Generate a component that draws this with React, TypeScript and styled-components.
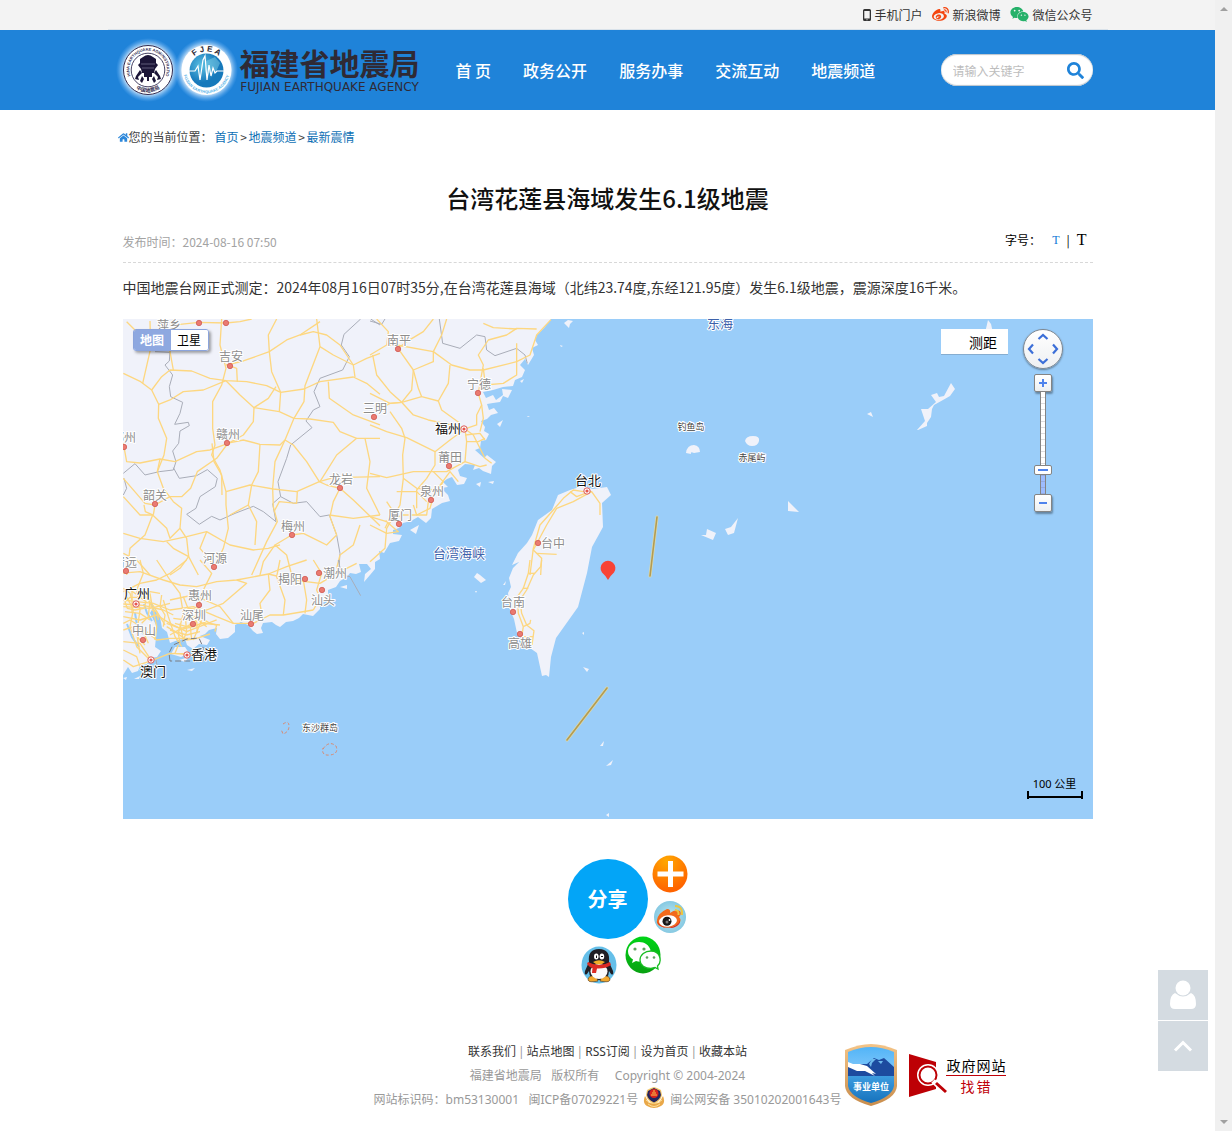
import React, { useState } from 'react';
import styled, { createGlobalStyle, css } from 'styled-components';
import { FaHome, FaSearch, FaWeibo, FaWeixin } from 'react-icons/fa';

const brand = '#1f83d9';
const cjk = '"Noto Sans CJK SC", sans-serif';
const ui = '"Noto Sans", "Noto Sans CJK SC", sans-serif';

const GlobalStyle = createGlobalStyle`
  *, *::before, *::after { box-sizing: border-box; }
  body { margin: 0; background: #fff; font-family: ${cjk}; font-size: 12px; line-height: 24px; color: #333; }
  a { color: inherit; text-decoration: none; }
  button { font: inherit; color: inherit; border: 0; padding: 0; background: none; cursor: pointer; }
  svg { display: block; }
`;

/* ---------- page frame ---------- */

const Shell = styled.div`
  display: flex;
  min-height: 100vh;
`;
const Page = styled.div`
  flex: 1;
  min-width: 0;
`;
const ScrollRail = styled.div`
  position: sticky;
  top: 0;
  width: 17px;
  height: 100vh;
  flex: none;
  display: flex;
  flex-direction: column;
  align-items: center;
  justify-content: space-between;
  padding: 7px 0;
  background: #f0f0f0;
`;
const Container = styled.div`
  width: 100%;
  max-width: 1000px;
  margin: 0 auto;
`;

/* ---------- top bar ---------- */

const TopBar = styled.div`
  background: #f3f3f3;
`;
const TopLinks = styled(Container)`
  display: flex;
  justify-content: flex-end;
  align-items: center;
  gap: 10px;
  height: 30px;
  padding-right: 15px;
  border-bottom: 1px solid #d9e2ea;
`;
const TopLink = styled.a`
  display: flex;
  align-items: center;
  gap: 3px;
`;

/* ---------- header ---------- */

const Header = styled.header`
  background: ${brand};
`;
const HeaderRow = styled(Container)`
  display: flex;
  align-items: center;
  height: 80px;
  padding: 0 15px 0 8px;
`;
const Brand = styled.a`
  display: flex;
  align-items: center;
  color: #2f2a35;
`;
const BrandText = styled.span`
  display: flex;
  flex-direction: column;
  align-items: center;
  margin-left: 2px;
`;
const BrandName = styled.span`
  font-size: 30px;
  font-weight: 700;
  line-height: 34px;
`;
const BrandLatin = styled.span`
  font-family: "DejaVu Sans", sans-serif;
  font-size: 12px;
  line-height: 16px;
  white-space: nowrap;
`;
const Nav = styled.nav`
  display: flex;
  margin-left: 20px;
`;
const NavLink = styled.a`
  padding: 0 16px;
  font-size: 16px;
  font-weight: 500;
  color: #fff;
`;
const SearchBox = styled.form`
  display: flex;
  align-items: center;
  width: 152px;
  height: 32px;
  margin-left: auto;
  padding: 0 9px 0 12px;
  border-radius: 16px;
  background: #fff;
  box-shadow: inset 0 1px 1px #b9c3cc, inset 0 -1px 1px #b9c3cc;
`;
const SearchInput = styled.input`
  flex: 1;
  min-width: 0;
  padding: 0;
  border: 0;
  outline: 0;
  background: none;
  font: 12px ${cjk};
  &::placeholder { color: #bdbdbd; opacity: 1; }
`;
const SearchButton = styled.button`
  color: ${brand};
`;

/* ---------- article ---------- */

const Breadcrumb = styled.nav`
  display: flex;
  align-items: center;
  padding: 15px 10px 0;
  color: #444;
`;
const HomeMark = styled.span`
  color: #2c87da;
`;
const Trail = styled.span`
  display: flex;
  padding-left: 2px;
`;
const Crumb = styled.a`
  color: #0d6fb5;
`;
const CrumbSep = styled.span`
  width: 10px;
  text-align: center;
`;
const Article = styled.article`
  padding: 0 15px;
`;
const Title = styled.h1`
  margin: 31px 0 14px;
  font-size: 24px;
  font-weight: 500;
  line-height: 36px;
  text-align: center;
  color: #111;
`;
const Meta = styled.div`
  display: flex;
  justify-content: space-between;
  padding-bottom: 8px;
  border-bottom: 1px dashed #d8d8d8;
  color: #a3a3a3;
`;
const FontSizes = styled.div`
  display: flex;
  align-items: center;
  gap: 7px;
  height: 20px;
  padding-right: 6px;
  color: #000;
`;
const SizeButton = styled.button<{ $size: number; $active?: boolean }>`
  font-family: "Liberation Serif", serif;
  font-size: ${p => p.$size}px;
  ${p => p.$active && css`color: #1078d6; margin-left: 4px;`}
`;
const Body = styled.p`
  margin: 10px 0 18px;
  font-size: 14px;
  line-height: 28px;
`;

/* ---------- map ---------- */

const MapFrame = styled.section`
  position: relative;
  height: 500px;
  overflow: hidden;
  background: #9acdf9;
`;
const MapCanvas = styled.svg`
  width: 100%;
  height: 100%;
`;
const MapTypes = styled.div`
  position: absolute;
  top: 10px;
  left: 10px;
  display: flex;
  border: 1px solid #8ba4dc;
  border-radius: 3px;
  overflow: hidden;
  box-shadow: 2px 2px 3px rgba(0, 0, 0, 0.35);
`;
const MapType = styled.button<{ $active?: boolean }>`
  width: 37px;
  line-height: 20px;
  background: ${p => (p.$active ? '#8ea8e0' : '#fff')};
  color: ${p => (p.$active ? '#fff' : '#000')};
  font-weight: ${p => (p.$active ? 700 : 400)};
`;
const MeasureButton = styled.button`
  position: absolute;
  top: 10px;
  right: 85px;
  width: 67px;
  height: 25px;
  padding-left: 18px;
  background: #fff;
  box-shadow: 0 1px 0 #86add0;
  font-size: 14px;
  line-height: 24px;
  color: #000;
`;
const NavControl = styled.div`
  position: absolute;
  top: 10px;
  right: 30px;
  display: flex;
  flex-direction: column;
  align-items: center;
`;
const PanPad = styled.div`
  display: grid;
  grid-template: repeat(3, 12px) / repeat(3, 12px);
  place-items: center;
  place-content: center;
  width: 40px;
  height: 40px;
  margin-bottom: 5px;
  border: 1px solid #7f8790;
  border-radius: 50%;
  background: linear-gradient(#fff, #eef0f2);
  box-shadow: 0 1px 2px rgba(0, 0, 0, 0.4);
`;
const PanButton = styled.button<{ $row: number; $col: number }>`
  grid-area: ${p => p.$row} / ${p => p.$col};
`;
const ZoomButton = styled.button`
  display: grid;
  place-items: center;
  width: 18px;
  height: 18px;
  border: 1px solid #848484;
  border-radius: 2px;
  background: linear-gradient(#fff, #eef0f2);
  box-shadow: 1px 2px 2px rgba(0, 0, 0, 0.35);
`;
const ZoomSlider = styled.input`
  appearance: none;
  writing-mode: vertical-lr;
  direction: rtl;
  width: 18px;
  height: 102px;
  margin: 0;
  background: none;
  &::-webkit-slider-runnable-track {
    width: 6px;
    height: 102px;
    margin: 0 auto;
    border: solid #848484;
    border-width: 0 1px;
    background:
      repeating-linear-gradient(transparent 0 5px, rgba(120, 120, 130, 0.25) 5px 6px),
      linear-gradient(#fff 0 78px, #9dbcff 78px);
  }
  &::-webkit-slider-thumb {
    appearance: none;
    width: 18px;
    height: 10px;
    margin-left: -7px;
    border: 1px solid #848484;
    border-radius: 2px;
    background: linear-gradient(#4f83ec, #4f83ec) center / 10px 2px no-repeat, #fff;
  }
`;
const ScaleBar = styled.div`
  position: absolute;
  right: 10px;
  bottom: 20px;
  width: 56px;
  font-family: ${ui};
  font-size: 11px;
  line-height: 14px;
  text-align: center;
  color: #000;
  &::after {
    content: "";
    display: block;
    height: 8px;
    border: solid #000;
    border-width: 0 2px;
    background: linear-gradient(#000, #000) 0 5px / 100% 2px no-repeat;
  }
`;

/* ---------- share ---------- */

const Share = styled.div`
  position: relative;
  width: 80px;
  height: 80px;
  margin: 40px auto 101px;
`;
const ShareButton = styled.button`
  width: 80px;
  height: 80px;
  border-radius: 50%;
  background: #03a5f7;
  font-size: 20px;
  font-weight: 700;
  color: #fff;
`;
const ShareTarget = styled.a<{ $x: number; $y: number }>`
  position: absolute;
  left: ${p => p.$x}px;
  top: ${p => p.$y}px;
`;

/* ---------- footer ---------- */

const Footer = styled.footer`
  display: grid;
  grid-template-columns: 1fr auto 1fr;
  padding-bottom: 19px;
  font-family: ${ui};
  color: #999;
`;
const FooterText = styled.div`
  grid-column: 2;
  display: flex;
  flex-direction: column;
  align-items: center;
  white-space: pre;
`;
const FooterLine = styled.div<{ $gap: number }>`
  display: flex;
  align-items: center;
  gap: ${p => p.$gap}px;
  height: 24px;
`;
const FooterLink = styled.a`
  color: #333;
`;
const Badges = styled.div`
  display: flex;
  align-items: center;
  gap: 12px;
  height: 62px;
  margin: 4px 0 0 4px;
`;
const ReportLink = styled.a`
  display: flex;
  align-items: center;
`;
const ReportText = styled.span`
  display: flex;
  flex-direction: column;
  align-items: center;
  margin-left: -2px;
  font: 14px/20px ${cjk};
  letter-spacing: 1px;
  color: #000;
`;
const ReportWord = styled.span`
  width: 60px;
  border-top: 1px solid #c00008;
  text-align: center;
  letter-spacing: 2px;
  color: #c00008;
`;
const FloatTools = styled.div`
  position: fixed;
  right: 24px;
  bottom: 60px;
  display: grid;
  gap: 1px;
`;
const FloatButton = styled.button`
  display: grid;
  place-items: center;
  width: 50px;
  height: 50px;
  background: #d4dbe1;
`;

/* ---------- map data ---------- */

const mainland =
  'M0 0H428L421 9 414 16 412 21 415 26 409 29 411 36 405 46 402 40 397 46 402 51 399 58 392 61 390 67 380 68 370 71 360 73 363 79 370 76 373 81 380 76 379 70 389 71 385 79 380 77 377 83 370 84 364 85 366 91 371 89 375 94 368 96 364 100 358 102 362 108 361 112 366 115 363 121 358 122 357 129 352 131 361 139 364 136 373 143 369 147 368 155 360 152 356 149 350 151 352 146 342 145 335 151 337 157 344 159 341 165 334 166 329 158 324 160 320 163 325 168 318 169 325 176 327 182 319 184 309 190 308 199 303 204 295 198 288 202 280 204 276 209 270 211 270 215 279 216 276 222 267 224 261 234 256 232 257 240 252 243 252 250 247 256 241 263 242 255 248 250 244 245 236 245 238 253 233 255 227 254 224 258 217 262 213 268 205 271 205 277 197 284 197 290 190 297 180 295 176 299 170 302 163 303 157 308 153 306 149 303 140 304 138 309 140 314 134 315 130 312 125 306 118 303 112 306 112 313 105 319 97 320 93 315 94 309 86 311 82 315 77 317 87 321 84 326 76 325 70 330 64 326 62 320 55 321 47 324 44 313 39 309 37 298 30 289 27 294 34 308 33 318 32 328 38 332 34 338 27 339 24 345 17 347 15 352 9 354 5 348 0 356Z';
const taiwan =
  'M435 176 447 171 460 167 470 170 484 168 488 176 479 184 480 208 469 228 464 254 455 288 433 319 428 338 426 358 423 356 419 357 414 334 407 329 394 314 391 300 387 291 385 274 388 268 386 259 390 249 396 243 389 246 395 234 404 224 409 216 415 201 429 191Z';
const islets = [
  'M441 4 445 1 450 2 447 5 446 9Z', 'M437 26 440 27 438 28Z', 'M397 62 401 60 399 64Z', 'M374 105 380 101 377 108Z', 'M404 97 407 97 405 98Z',
  'M287 211 296 206 293 215Z', 'M365 163 371 162 370 165Z', 'M353 165 358 163 357 168Z', 'M48 335 52 328 62 328 66 334 58 338Z', 'M56 341 66 338 62 343Z',
  'M64 351 72 349 69 352Z', 'M217 268 224 266 224 270Z', 'M0 359 4 358 3 361Z', 'M11 360 17 357 16 360Z', 'M351 258 354 254 357 256 363 261 358 264Z',
  'M380 266 383 262 382 266Z', 'M352 272 354 272 353 274Z', 'M247 246 251 241 250 250Z', 'M459 314 461 313 461 316Z', 'M460 348 466 350 464 353Z',
  'M477 427 481 422 480 427Z', 'M483 447 490 441 488 446Z', 'M483 496 486 494 486 498Z', 'M563 134Q564 126 571 126 577 127 577 133L571 134Q567 132 568 135Z',
  'M622 122Q623 117 630 117 637 117 636 122 635 127 629 127 624 127 622 122Z', 'M578 216 583 216 584 210 593 214 590 221Z', 'M602 210 608 208 615 199 611 214 605 216Z',
  'M665 182 676 193 665 192Z', 'M744 95 748 93 750 98Z', 'M794 111 802 102 798 90 805 90 813 83 808 76 814 74 816 78 821 77 828 64 832 70 827 77 820 81 811 86 809 90 808 98 804 104 804 107 795 111Z',
  'M862 14 865 1 868 5 870 14Z', 'M843 33 848 34 845 36Z',
];
const rivers = ['M21 285 24 294 29 302', 'M4 305 9 318 16 328', 'M12 294 14 306 20 315', 'M28 283 32 296'];

const sheets: { x: number; y: number; borders: string[]; roads: string[] }[] = [
  {
    x: -3, y: -4,
    borders: [
      'M150 108 148 138 135 150 158 180 148 215 152 245 188 262 180 295 164 328 205 322 208 332 180 348 176 385 158 408 168 440 160 465 118 470 75 480 45 446 10 475',
      'M160 458 178 490 230 482 262 464 292 490 286 515 240 545 228 580 200 598 238 628 275 604 300 615 348 594 400 574 430 590 468 620 458 566 482 545 474 500 500 430 512 390 576 338 558 318 580 285 600 275 582 230 600 190 668 165 688 125 664 90 672 58 722 12',
      'M482 545 520 565 560 560 600 605 628 600 650 660 660 715 656 780',
      'M12 490 20 520 10 540', 'M105 110 150 112', 'M752 12 780 30',
    ],
    roads: [
      'M90 18 92 100 68 205', 'M10 175 62 200 95 225 116 268 115 310 140 370 132 420 112 470 130 520 160 560 185 580 180 640 200 670 206 725',
      'M95 225 125 185 150 165 215 168 270 190 318 197 380 200 440 212 482 232 552 222 600 200 700 186 740 205 780 238',
      'M116 268 150 255 190 230 250 225 318 197', 'M160 165 150 110 130 60', 'M20 20 60 60 90 45 110 70 60 70', 'M115 64 180 28 236 22 318 24 360 20 395 12',
      'M305 12 300 90 318 160 305 210 278 260 278 340 285 390 275 420 300 465 318 530 318 570 325 640 310 700 285 755',
      'M330 153 350 160 352 200', 'M318 150 370 138 448 110 500 75 540 60 600 20', 'M448 110 445 60 470 12', 'M448 110 455 170 482 232 478 290',
      'M540 60 580 50 620 60 660 90 700 150 740 130 780 115', 'M590 12 600 95 555 212 552 260 522 310 495 375 465 440 458 520 460 575 472 620 440 680 395 780',
      'M600 95 640 120 700 150 705 186', 'M625 200 628 250 700 300 780 330', 'M318 197 360 240 402 278 478 290 522 310 570 312 640 322 660 350 710 370 780 370',
      'M402 278 400 320 370 360 325 385 270 405 230 410 165 440 120 432 60 444 20 440 10 385', 'M402 278 445 250 468 215', 'M320 385 370 375 420 388 480 390 495 375 520 390 560 440 598 500 620 510 660 520',
      'M420 388 415 470 395 510 385 570 330 600', 'M276 385 282 440 305 480 306 540', 'M320 390 290 430 232 470 212 520 185 545 150 545 105 570 75 565 10 490',
      'M318 530 390 510 460 522 530 530 598 500 640 488 780 485', 'M710 370 650 420 600 500', 'M735 370 750 440 740 520 780 600',
      'M660 520 640 560 630 605 650 660 620 690 600 680 550 655 515 660 465 690 500 720 515 780', 'M660 520 700 555 780 632', 'M628 600 700 610 780 600', 'M532 530 530 565 478 560 462 590',
      'M10 545 60 600 98 600 140 640 150 670 180 640', 'M98 600 75 660 30 700 20 780', 'M10 655 60 670 130 680 200 665 260 650 330 690 400 705 445 700 480 690',
      'M105 570 100 600', 'M206 725 180 760 150 780', 'M260 650 240 700 285 755', 'M385 570 410 620 405 690', 'M140 680 160 700 206 725 235 780', 'M720 630 700 690 660 720 650 760', 'M10 715 50 735 90 780', 'M465 690 430 740 420 780', 'M72 570 76 590 98 600', 'M120 432 112 470',
    ],
  },
  {
    x: 247, y: -4,
    borders: ['M208 12 218 85 270 100 320 60 345 65 350 105 375 122 440 100 465 120 472 145', 'M0 18 35 28 45 12'],
    roads: [
      'M0 120 50 90 80 90 190 110 245 150 300 165 340 165 440 140 480 120 500 60 543 14', 'M190 12 160 50 110 80 84 100 130 165 190 140 190 110 215 60 230 12', 'M50 90 55 50 20 12',
      'M130 165 125 225 95 262 60 265 0 235', 'M130 165 145 220 155 245 205 258 235 205 240 150', 'M95 262 130 300 175 315 245 330 285 342', 'M205 258 215 285 270 325',
      'M155 245 95 262', 'M8 120 20 180 60 230 95 262 60 265 15 290', 'M0 330 50 350 110 368 195 410 195 450 170 490 140 525 140 580', 'M60 290 95 340 105 370 98 420 100 490 90 570 50 640 45 700 0 740',
      'M285 342 240 375 195 410', 'M0 475 50 488 130 470 230 470 285 440 290 380 285 342 320 330 320 300 335 270 325 235 330 205 340 150 325 120 355 75 410 60 440 40 500 42',
      'M340 25 370 38 440 42', 'M440 85 440 180 400 205 345 210', 'M285 342 310 360 345 430 365 445', 'M285 360 330 355 345 375', 'M290 380 325 380 345 370', 'M285 440 330 455 350 450', 'M335 270 340 310 330 350',
      'M100 490 140 520 200 525 240 470 265 500', 'M190 470 220 500 190 545 180 580 140 600 130 570', 'M80 530 140 530 170 560', 'M45 620 100 600 170 600 175 560', 'M0 605 50 620 85 650 50 655 0 630', 'M50 560 70 590 45 640', 'M340 160 345 200 355 210',
      'M690 600 690 565 665 530 640 530 610 525 580 550 550 585 510 630 490 700 480 780', 'M665 530 610 560 560 580 530 630 490 705 515 730 512 780', 'M500 715 560 718', 'M600 530 620 545 660 530',
    ],
  },
  {
    x: -3, y: 241,
    borders: ['M655 0 665 45 690 50 722 107', 'M108 300 112 320'],
    roads: [
      'M10 95 60 70 110 60 150 40 200 0', 'M10 120 50 125 100 130 150 150 220 140 290 170 340 190 400 190 450 165 490 165 580 150', 'M0 40 60 35 130 60 180 75 230 80 290 65 350 60 445 42 500 20 560 0',
      'M60 0 70 40 50 90 60 150 50 220 60 280', 'M110 0 150 60 180 100 190 160 175 220 180 250', 'M240 0 275 40 250 90 236 135 245 180 220 240', 'M10 170 60 180 110 165 150 190 200 215 290 180',
      'M10 210 40 200 80 215 110 240 150 235 210 235', 'M20 110 40 150 30 200 50 260 90 300', 'M80 110 100 150 110 200 105 240', 'M10 245 60 250 80 280 95 302 150 280 200 282', 'M130 120 145 170 165 230 185 260',
      'M150 120 220 105 300 140 340 190', 'M10 300 40 320 95 302', 'M190 110 210 160 260 200', 'M140 190 180 205 250 190 300 195', 'M205 145 260 150 310 130 380 70 350 60', 'M445 42 450 90 420 130 425 160', 'M490 165 495 120 470 50 480 0',
      'M550 60 560 120 555 160', 'M580 0 605 40 590 90 600 115 580 150', 'M445 42 520 60 600 70 650 40 710 10', 'M10 140 90 145 150 130', 'M15 155 60 160 90 180', 'M60 100 90 120 85 170 65 190', 'M150 210 200 225 240 215', 'M160 175 200 180 240 165', 'M30 90 60 110 90 95 120 100', 'M180 190 190 240', 'M210 190 215 240', 'M10 270 50 290 60 320',
      'M15 125 30 112 60 112 78 125 72 145 45 150 22 145Z', 'M36 95 36 160', 'M10 132 70 136 130 150 160 165', 'M90 100 95 130 120 170 135 195', 'M125 105 120 140 135 165 130 200', 'M140 200 165 215 200 240 230 235 270 222', 'M150 225 175 210 220 200 260 185', 'M165 190 200 200 225 185 240 150', 'M195 160 200 215 188 245', 'M230 180 232 220', 'M245 175 270 190 290 195 285 215', 'M175 255 165 280 200 282', 'M10 190 30 180 55 195 70 215 85 250', 'M50 205 55 235 75 255', 'M95 150 110 155 115 180', 'M10 85 30 100 36 120',
    ],
  },
  {
    x: 247, y: 241,
    borders: [],
    roads: ['M480 0 475 40 460 85 442 110 445 160 460 200 455 230 490 230', 'M515 0 512 20 490 45 470 90 450 120 455 160 470 195 492 212 486 255', 'M475 40 495 40', 'M458 85 475 85', 'M460 200 480 190 482 180'],
  },
];

type Place = [name: string, x: number, y: number, dotX: number, dotY: number];
const cities: Place[] = [
  ['萍乡', 46, 5, 76, 4], ['', 0, 0, 103, 4], ['吉安', 108, 36, 107, 47], ['赣州', 105, 114, 104, 124], ['郴州', 1, 117, 1, 128], ['韶关', 32, 175, 32, 185],
  ['龙岩', 218, 159, 217, 169], ['三明', 252, 88, 251, 98], ['南平', 276, 20, 275, 30], ['宁德', 356, 64, 355, 74], ['莆田', 327, 137, 326, 147], ['泉州', 309, 171, 308, 181],
  ['厦门', 277, 195, 276, 205], ['梅州', 170, 206, 169, 216], ['河源', 92, 238, 91, 248], ['清远', 2, 242, 3, 252], ['潮州', 212, 253, 196, 254], ['揭阳', 167, 259, 182, 260],
  ['汕头', 200, 280, 199, 271], ['惠州', 77, 275, 76, 286], ['深圳', 71, 295, 70, 305], ['中山', 21, 310, 20, 321], ['汕尾', 129, 295, 128, 305], ['台中', 430, 223, 415, 224],
  ['台南', 390, 282, 390, 293], ['高雄', 397, 323, 397, 315],
];
const capitals: Place[] = [
  ['福州', 325, 108, 341, 110], ['广州', 14, 273, 13, 285], ['香港', 81, 334, 64, 336], ['澳门', 30, 351, 28, 341], ['台北', 465, 160, 464, 172],
];
const smallNames: [string, number, number][] = [['钓鱼岛', 568, 107], ['赤尾屿', 629, 138], ['东沙群岛', 197, 408]];
const seaNames: [string, number, number][] = [['台湾海峡', 336, 233], ['东海', 597, 3]];

const PlaceName = styled.text<{ $size: number; $tone: string }>`
  font: ${p => p.$size}px ${cjk};
  fill: ${p => p.$tone};
  stroke: #fff;
  stroke-width: 2px;
  stroke-linejoin: round;
  paint-order: stroke;
  text-anchor: middle;
  dominant-baseline: central;
`;

function EpicenterMap() {
  return (
    <MapCanvas viewBox="0 0 970 500" preserveAspectRatio="xMidYMid slice" role="img" aria-label="震中位置图">
      <rect width="970" height="500" fill="#9acdf9" />
      <g fill="#f0f2fa">
        <path d={mainland} />
        <path d={taiwan} />
        {islets.map(d => <path key={d} d={d} />)}
      </g>
      <g fill="none" stroke="#9acdf9" strokeWidth="2">
        {rivers.map(d => <path key={d} d={d} />)}
      </g>
      {sheets.map(s => (
        <g key={`${s.x},${s.y}`} transform={`translate(${s.x} ${s.y}) scale(0.3333)`} fill="none" strokeLinejoin="round">
          <g stroke="#a9adb8" strokeWidth="3">{s.borders.map(d => <path key={d} d={d} />)}</g>
          <g stroke="#fdd780" strokeWidth="4">{s.roads.map(d => <path key={d} d={d} />)}</g>
        </g>
      ))}
      <path d="M47 342 46 334 50 326 64 320 76 319 80 328 80 342Z" fill="none" stroke="#7b7d82" strokeDasharray="6 3" />
      <g fill="none" stroke="#d98a72" strokeDasharray="3 2">
        <path d="M160 405Q166 401 166 407T160 415L158 410" />
        <path d="M200 430Q206 421 213 427 216 435 207 436T200 429" />
      </g>
      {['M534 198 527 257', 'M484 369 444 421'].map(d => (
        <g key={d} fill="none" strokeLinecap="round">
          <path d={d} stroke="#dcd9a9" strokeWidth="3" />
          <path d={d} stroke="#b29b54" strokeWidth="1.6" />
        </g>
      ))}
      {cities.map(([name, x, y, dx, dy]) => (
        <g key={name + dx}>
          <PlaceName x={x} y={y} $size={12} $tone="#8d8d8d">{name}</PlaceName>
          <circle cx={dx} cy={dy} r="2.7" fill="#ea7a70" stroke="#cf5a55" strokeWidth="0.8" />
        </g>
      ))}
      {capitals.map(([name, x, y, dx, dy]) => (
        <g key={name}>
          <PlaceName x={x} y={y} $size={13} $tone="#111">{name}</PlaceName>
          <circle cx={dx} cy={dy} r="3.2" fill="#fff" stroke="#dc5a55" />
          <circle cx={dx} cy={dy} r="1.6" fill="#e5554e" />
        </g>
      ))}
      {smallNames.map(([name, x, y]) => <PlaceName key={name} x={x} y={y} $size={9} $tone="#444">{name}</PlaceName>)}
      {seaNames.map(([name, x, y]) => <PlaceName key={name} x={x} y={y} $size={13} $tone="#3d62ab">{name}</PlaceName>)}
      <path d="M485 261Q482 256 479 253.500A7.400 7.400 0 1 1 491 253.500Q488 256 485 261Z" fill="#f84336" />
    </MapCanvas>
  );
}

/* ---------- drawings ---------- */

function Emblems() {
  return (
    <svg width="122" height="80" viewBox="0 0 122 80" aria-hidden="true">
      <defs>
        <radialGradient id="halo"><stop offset=".76" stopColor="#fff" stopOpacity=".75" /><stop offset="1" stopColor="#7fc0ff" stopOpacity="0" /></radialGradient>
        <radialGradient id="globe" cx=".35" cy=".35"><stop offset="0" stopColor="#5cc0e2" /><stop offset="1" stopColor="#1679bb" /></radialGradient>
        <path id="arcA" d="M14.500 46A18.700 18.700 0 1 1 49.500 46" />
        <path id="arcB" d="M12 49.200A22 22 0 0 0 52 49.200" />
        <path id="arcC" d="M73 34A18.500 18.500 0 0 1 108 34" />
        <path id="arcD" d="M67.500 43A23.200 23.200 0 0 0 113.500 43" />
      </defs>
      <circle cx="32" cy="40" r="32" fill="url(#halo)" />
      <circle cx="90" cy="40" r="32" fill="url(#halo)" />
      <circle cx="32" cy="40" r="24.500" fill="#fff" stroke="#302b50" />
      <circle cx="32" cy="40" r="16.800" fill="none" stroke="#302b50" strokeWidth=".9" />
      <g fill="#302b50" fontFamily='"Liberation Sans", "Noto Sans CJK SC", sans-serif' fontWeight="700">
        <text fontSize="4"><textPath href="#arcA" startOffset="50%" textAnchor="middle">CHINA EARTHQUAKE ADMINISTRATION</textPath></text>
        <text fontSize="5"><textPath href="#arcB" startOffset="50%" textAnchor="middle">中国地震局</textPath></text>
      </g>
      <g fill="#1c1638">
        <path d="M27 27Q32 23 37 27L40 29V33L42 35 39 39 38 43H26L25 39 22 35 24 33V29Z" />
        <path d="M28 42H36L36 47 33 47 33 51 31 51 31 47 28 47Z" />
        <path d="M24 40 26 43 22 47 23 50 19 49 20 46ZM40 40 38 43 42 47 41 50 45 49 44 46Z" />
        <path d="M26 46 28 49 26 53 24 51ZM38 46 36 49 38 53 40 51Z" />
      </g>
      <path d="M25 34H39M26 38H38" stroke="#8e8aa5" strokeWidth=".6" />
      <circle cx="90.500" cy="40" r="25" fill="#fff" />
      <circle cx="90.500" cy="40.500" r="17" fill="url(#globe)" />
      <path d="M90 31 99 27 104 33 100 42 96 39 91 47 89 40Z" fill="#82d2e7" opacity=".5" />
      <path d="M73 41H79L82 36 84 50 87 30 89 26 91 50 93 35 95 46 97 38 99 43 101 41H108" fill="none" stroke="#fff" strokeWidth="1.200" />
      <g fontFamily='"Liberation Sans", sans-serif' fontWeight="700">
        <text fontSize="8" fill="#2b2a35"><textPath href="#arcC" startOffset="50%" textAnchor="middle">F J E A</textPath></text>
        <text fontSize="4" fill="#58b4e8"><textPath href="#arcD" startOffset="50%" textAnchor="middle">FUJIAN EARTHQUAKE AGENCY</textPath></text>
      </g>
    </svg>
  );
}

function PhoneIcon() {
  return (
    <svg width="8" height="12" viewBox="0 0 8 12" aria-hidden="true">
      <path fillRule="evenodd" fill="#333" d="M1.500 0H6.500Q8 0 8 1.500V10.500Q8 12 6.500 12H1.500Q0 12 0 10.500V1.500Q0 0 1.500 0ZM1.300 2V9.500H6.700V2ZM4 10.200a.6.6 0 1 0 .01 0Z" />
    </svg>
  );
}

function Chevron({ turn = 0 }: { turn?: number }) {
  return (
    <svg width="12" height="12" viewBox="0 0 12 12" aria-hidden="true">
      <path d="M1.500 8 6 4 10.500 8" fill="none" stroke="#3c6fd8" strokeWidth="2.200" transform={`rotate(${turn} 6 6)`} />
    </svg>
  );
}

function Sign({ plus }: { plus?: boolean }) {
  return (
    <svg width="8" height="8" viewBox="0 0 8 8" aria-hidden="true">
      <path d={plus ? 'M0 4H8M4 0V8' : 'M0 4H8'} stroke="#4f83ec" strokeWidth="2" />
    </svg>
  );
}

function ScrollArrow({ down }: { down?: boolean }) {
  return (
    <svg width="8" height="4" viewBox="0 0 8 4" aria-hidden="true">
      <path d={down ? 'M0 0H8L4 4Z' : 'M0 4H8L4 0Z'} fill="#a0a0a0" />
    </svg>
  );
}

function MoreDisc() {
  return (
    <svg width="36" height="38" viewBox="0 0 36 38" aria-hidden="true">
      <defs><radialGradient id="orange" cx=".4" cy=".15" r=".8"><stop offset="0" stopColor="#ffa800" /><stop offset="1" stopColor="#ff6400" /></radialGradient></defs>
      <ellipse cx="18" cy="19" rx="17.500" ry="18.500" fill="url(#orange)" />
      <path d="M18.500 6V32M5.500 19H31.500" stroke="#fff" strokeWidth="5" />
    </svg>
  );
}

function WeiboDisc() {
  return (
    <svg width="32" height="32" viewBox="0 0 32 32" aria-hidden="true">
      <defs><radialGradient id="sky"><stop offset="0" stopColor="#c0e9f1" /><stop offset="1" stopColor="#86c9e2" /></radialGradient></defs>
      <circle cx="16" cy="16" r="16" fill="url(#sky)" />
      <path d="M3 19Q4 12 13 8 17 8 16 12 21 8 26 10 28 13 25 16 29 20 23 24 14 29 6 25 2 23 3 19Z" fill="#f26a1b" />
      <path d="M3 20Q5 27 14 27 25 25 26 19 27 24 20 26.500 8 29 3 20Z" fill="#dd2418" />
      <ellipse cx="14" cy="20" rx="9" ry="5.700" fill="#fff" transform="rotate(-6 14 20)" />
      <circle cx="13" cy="20.300" r="4.500" fill="#171717" />
      <circle cx="13" cy="21" r="1.500" fill="#777" /><circle cx="15.500" cy="19" r=".9" fill="#fff" />
      <path d="M21 5Q29 5 28 14M21 9Q25 9 24.500 14" fill="none" stroke="#edc63f" strokeWidth="2" />
    </svg>
  );
}

function WechatDisc() {
  return (
    <svg width="36" height="38" viewBox="0 0 36 38" aria-hidden="true">
      <defs><linearGradient id="green" x2="0" y2="1"><stop offset="0" stopColor="#00d417" /><stop offset="1" stopColor="#08a111" /></linearGradient></defs>
      <ellipse cx="18" cy="19" rx="17.500" ry="18.500" fill="url(#green)" />
      <path d="M14 6C7 6 3 10.500 3 15.500 3 19 5 21.500 8 23.500L7 27 11 25Q14 26 17 25.500C25 24 26 19 25.500 14 24 9 20 6 14 6Z" fill="#fff" />
      <path d="M26 15C20 15 15 18.500 15 24S20 32.500 26 32.500L30 31.500 33 33 32.500 30C37 26 36 15 26 15Z" fill="#fff" stroke="#17bd21" strokeWidth="1.300" />
      <g fill="#5fa35e"><circle cx="10" cy="13" r="1.600" /><circle cx="19" cy="13" r="1.600" /><circle cx="22" cy="21.500" r="1.300" /><circle cx="29" cy="21.500" r="1.300" /></g>
    </svg>
  );
}

function QqDisc() {
  return (
    <svg width="36" height="38" viewBox="0 0 36 38" aria-hidden="true">
      <ellipse cx="18" cy="19" rx="17.500" ry="18.500" fill="#65bfe9" />
      <path d="M18 3C10 3 7 8 8 16L4 25Q3 30 6 28L8 25Q8 34 18 34T28 25L30 28Q33 30 32 25L28 16C29 8 26 3 18 3Z" fill="#201f25" />
      <path d="M7 34Q7 29 15 30L17 35Q8 37 7 34ZM29 34Q29 29 21 30L19 35Q28 37 29 34Z" fill="#f1a72d" stroke="#4d3215" strokeWidth=".6" />
      <ellipse cx="18" cy="25.500" rx="8.500" ry="7.500" fill="#fafafa" />
      <ellipse cx="15.300" cy="10.500" rx="2.300" ry="3" fill="#fff" /><ellipse cx="20.900" cy="10.500" rx="2.300" ry="3" fill="#fff" />
      <path d="M15.500 9.500V12M20 11Q21 9 22 11" stroke="#111" fill="none" />
      <path d="M12 16Q18 12.500 24 16 21 18.500 18 18.500T12 16Z" fill="#f2ae28" />
      <path d="M7 16Q18 22 29 16L30 19Q24 23 16 22.500L15 27 11 27 11.500 22Q8 21 6 18Z" fill="#dc2b23" />
    </svg>
  );
}

const BadgeSvg = styled.svg`
  margin-bottom: 4px;
`;

function PoliceBadge() {
  return (
    <BadgeSvg width="22" height="22" viewBox="0 0 22 22" aria-hidden="true">
      <path d="M2 9Q-1 16 4 19 11 23 18 19 23 16 20 9L16 16H6Z" fill="#e9a849" />
      <path d="M3 13Q11 20 19 13M5 17Q11 22 17 17" fill="none" stroke="#ffe09a" />
      <path d="M11 0 14 1 18 3 19 8Q18 14 11 17 4 14 3 8L4 3 8 1Z" fill="#f3c66a" />
      <path d="M11 1 17 4 18 8Q17 13 11 15.500 5 13 4 8L5 4Z" fill="#24265e" />
      <circle cx="11" cy="6.500" r="4.500" fill="#d9221c" />
      <path d="M11 3V5M8 8H14M9 6H13" stroke="#f7c84d" />
    </BadgeSvg>
  );
}

function InstitutionBadge() {
  return (
    <svg width="52" height="62" viewBox="0 0 52 62" role="img" aria-label="事业单位">
      <defs>
        <linearGradient id="rim" x2="0" y2="1"><stop offset="0" stopColor="#f4c487" /><stop offset="1" stopColor="#c98d4c" /></linearGradient>
        <linearGradient id="day" x2="0" y2="1"><stop offset="0" stopColor="#52b4f7" /><stop offset="1" stopColor="#8accfb" /></linearGradient>
        <linearGradient id="lake" x2="0" y2="1"><stop offset="0" stopColor="#3d9ce0" /><stop offset="1" stopColor="#1672bc" /></linearGradient>
      </defs>
      <path d="M0 6Q14 0 26 0T52 6V42Q51 55 26 62 1 55 0 42Z" fill="url(#rim)" />
      <path d="M3 8Q15 3 26 3T49 8V32H3Z" fill="url(#day)" />
      <path d="M3 20 12 20 22 20 29 14 34 16 39 14 49 23V32H3Z" fill="#1d4b9f" />
      <path d="M27 15 31 15 27 19 26 23 24 20ZM33 17 38 17 36 20Z" fill="#6db9ec" />
      <path d="M3 18 8 20 15 20 22 22 31 30 27 29 30 32 20 27 12 27 3 23Z" fill="#fff" />
      <path d="M3 32H49V42Q47 53 26 59 5 53 3 42Z" fill="url(#lake)" />
      <text x="26" y="45.500" textAnchor="middle" fill="#fff" fontSize="9" fontWeight="700" fontFamily='"Noto Sans CJK SC", sans-serif'>事业单位</text>
    </svg>
  );
}

function ReportMark() {
  return (
    <svg width="39" height="43" viewBox="0 0 39 43" aria-hidden="true">
      <path d="M0 0 27 8V35L0 43Z" fill="#bd0005" />
      <circle cx="19" cy="21" r="11" fill="#fff" />
      <circle cx="19" cy="21" r="8.500" fill="#fff" stroke="#bd0005" strokeWidth="2" />
      <path d="M24 27 38 40" stroke="#fff" strokeWidth="5" />
      <path d="M27 29 37 38" stroke="#bd0005" strokeWidth="3" />
    </svg>
  );
}

/* ---------- page ---------- */

const navItems = ['首 页', '政务公开', '服务办事', '交流互动', '地震频道'];
const crumbs = ['首页', '地震频道', '最新震情'];
const footerLinks = ['联系我们', '站点地图', 'RSS订阅', '设为首页', '收藏本站'];

export default function App() {
  const [zoom, setZoom] = useState(4);
  return (
    <Shell>
      <GlobalStyle />
      <Page>
        <TopBar>
          <TopLinks>
            <TopLink href="#"><PhoneIcon />手机门户</TopLink>
            <TopLink href="#"><FaWeibo size={17} color="#f4450f" />新浪微博</TopLink>
            <TopLink href="#"><FaWeixin size={19} color="#25b169" />微信公众号</TopLink>
          </TopLinks>
        </TopBar>
        <Header>
          <HeaderRow>
            <Brand href="#">
              <Emblems />
              <BrandText>
                <BrandName>福建省地震局</BrandName>
                <BrandLatin>FUJIAN EARTHQUAKE AGENCY</BrandLatin>
              </BrandText>
            </Brand>
            <Nav>
              {navItems.map(item => <NavLink key={item} href="#">{item}</NavLink>)}
            </Nav>
            <SearchBox role="search">
              <SearchInput aria-label="搜索" placeholder="请输入关键字" />
              <SearchButton type="button" aria-label="搜索"><FaSearch size={17} /></SearchButton>
            </SearchBox>
          </HeaderRow>
        </Header>

        <Container as="main">
          <Breadcrumb>
            <HomeMark><FaHome size={11} /></HomeMark>
            您的当前位置：
            <Trail>
              {crumbs.map((crumb, i) => (
                <React.Fragment key={crumb}>
                  {i > 0 && <CrumbSep>&gt;</CrumbSep>}
                  <Crumb href="#">{crumb}</Crumb>
                </React.Fragment>
              ))}
            </Trail>
          </Breadcrumb>
          <Article>
            <Title>台湾花莲县海域发生6.1级地震</Title>
            <Meta>
              <span>发布时间：2024-08-16 07:50</span>
              <FontSizes>
                字号：
                <SizeButton $size={12} $active aria-label="小号字">T</SizeButton>
                |
                <SizeButton $size={16} aria-label="大号字">T</SizeButton>
              </FontSizes>
            </Meta>
            <Body>中国地震台网正式测定：2024年08月16日07时35分,在台湾花莲县海域（北纬23.74度,东经121.95度）发生6.1级地震，震源深度16千米。</Body>
            <MapFrame>
              <EpicenterMap />
              <MapTypes>
                <MapType $active>地图</MapType>
                <MapType>卫星</MapType>
              </MapTypes>
              <MeasureButton>测距</MeasureButton>
              <NavControl>
                <PanPad>
                  <PanButton $row={1} $col={2} aria-label="向上平移"><Chevron /></PanButton>
                  <PanButton $row={2} $col={1} aria-label="向左平移"><Chevron turn={-90} /></PanButton>
                  <PanButton $row={2} $col={3} aria-label="向右平移"><Chevron turn={90} /></PanButton>
                  <PanButton $row={3} $col={2} aria-label="向下平移"><Chevron turn={180} /></PanButton>
                </PanPad>
                <ZoomButton aria-label="放大" onClick={() => setZoom(z => Math.min(19, z + 1))}><Sign plus /></ZoomButton>
                <ZoomSlider type="range" aria-label="缩放级别" min={0} max={19} value={zoom} onChange={e => setZoom(Number(e.target.value))} />
                <ZoomButton aria-label="缩小" onClick={() => setZoom(z => Math.max(0, z - 1))}><Sign /></ZoomButton>
              </NavControl>
              <ScaleBar>100 公里</ScaleBar>
            </MapFrame>
          </Article>
        </Container>

        <Share>
          <ShareButton>分享</ShareButton>
          <ShareTarget href="#" aria-label="更多" $x={84} $y={-4}><MoreDisc /></ShareTarget>
          <ShareTarget href="#" aria-label="微博" $x={86} $y={42}><WeiboDisc /></ShareTarget>
          <ShareTarget href="#" aria-label="微信" $x={57} $y={77}><WechatDisc /></ShareTarget>
          <ShareTarget href="#" aria-label="QQ" $x={13} $y={87}><QqDisc /></ShareTarget>
        </Share>

        <Footer>
          <FooterText>
            <FooterLine $gap={2}>
              {footerLinks.map((link, i) => (
                <React.Fragment key={link}>
                  {i > 0 && <span>|</span>}
                  <FooterLink href="#">{link}</FooterLink>
                </React.Fragment>
              ))}
            </FooterLine>
            <FooterLine $gap={0}>福建省地震局   版权所有     Copyright © 2004-2024</FooterLine>
            <FooterLine $gap={5}>
              <span>网站标识码：bm53130001   闽ICP备07029221号</span>
              <PoliceBadge />
              <span>闽公网安备 35010202001643号</span>
            </FooterLine>
          </FooterText>
          <Badges>
            <InstitutionBadge />
            <ReportLink href="#">
              <ReportMark />
              <ReportText>政府网站<ReportWord>找错</ReportWord></ReportText>
            </ReportLink>
          </Badges>
        </Footer>
      </Page>
      <ScrollRail>
        <ScrollArrow />
        <ScrollArrow down />
      </ScrollRail>
      <FloatTools>
        <FloatButton aria-label="个人中心">
          <svg width="26" height="30" viewBox="0 0 26 30" aria-hidden="true">
            <circle cx="13" cy="8" r="7.500" fill="#fff" />
            <path d="M5 13Q0 15 0 24 0 29 5 29H21Q26 29 26 24 26 15 21 13 13 20 5 13Z" fill="#fff" />
          </svg>
        </FloatButton>
        <FloatButton aria-label="返回顶部">
          <svg width="20" height="12" viewBox="0 0 20 12" aria-hidden="true">
            <path d="M2 10.500 10 2.500 18 10.500" fill="none" stroke="#fff" strokeWidth="3" />
          </svg>
        </FloatButton>
      </FloatTools>
    </Shell>
  );
}
